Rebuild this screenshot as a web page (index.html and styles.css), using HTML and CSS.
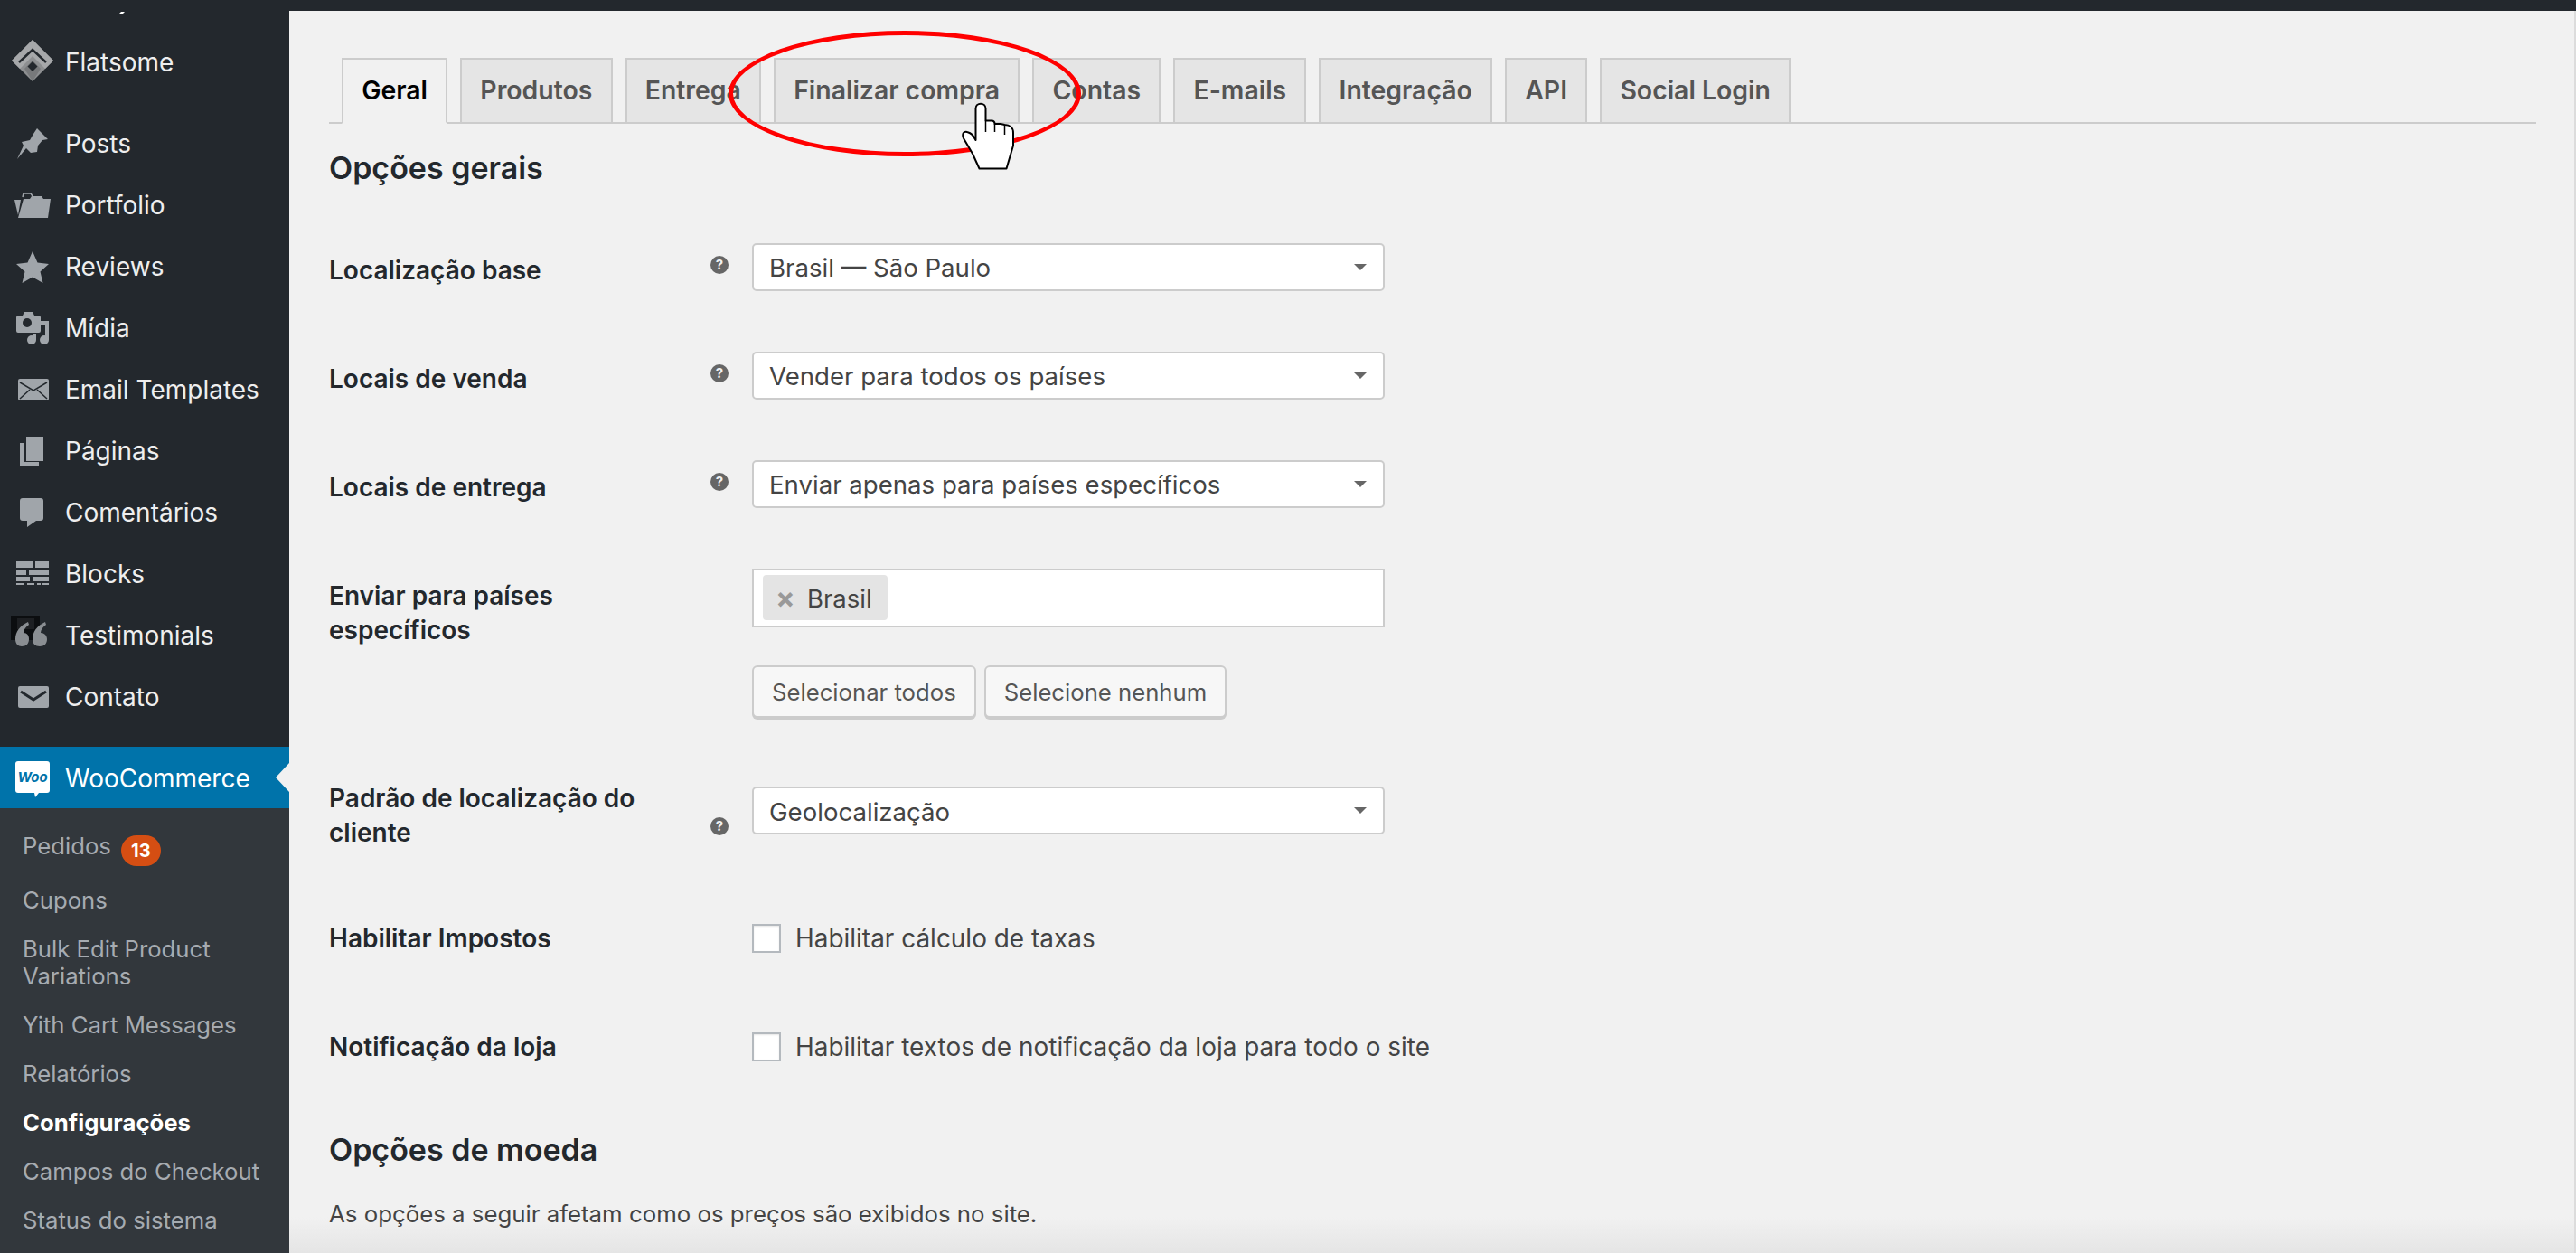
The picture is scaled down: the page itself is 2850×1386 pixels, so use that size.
FILE: index.html
```html
<!DOCTYPE html>
<html lang="pt-BR">
<head>
  <meta charset="UTF-8" />
  <title>Configurações ‹ WooCommerce</title>
  <link rel="stylesheet" href="styles.css">
</head>
<body>
  <div class="layout">
    <aside class="sidebar">
      <svg class="cut-marks" viewBox="0 0 320 16"><path d="M43 12l4 2-2-1z" fill="#888"/><path d="M132 15l2-2h4l-2 2z" fill="#fff"/></svg>

      <a class="menu-item menu-first">
        <svg class="ico" viewBox="0 0 72 68"><path d="M36 9l23 23-23 23-23-23z" fill="#8d8f91"/><path d="M36 9L13 32l9 9 14-14 14 14 9-9z" fill="#a6a8aa"/><path d="M21 34l15-14 15 14" fill="none" stroke="#23282d" stroke-width="2.5"/><path d="M27 41l9 14 9-14-9-9z" fill="#77797b"/><path d="M36 33l5.500 5.500-5.500 5.500-5.500-5.500z" fill="#23282d"/></svg>
        <span>Flatsome</span>
      </a>

      <div class="menu-group">
        <a class="menu-item">
          <svg class="ico" viewBox="0 0 72 68"><path d="M41 17l12 12-6 1-5 6-1 7-7 1-5-5-10 12 7-15-2-4 9-2 4-7z" fill="#a0a5aa"/></svg>
          <span>Posts</span>
        </a>
        <a class="menu-item">
          <svg class="ico" viewBox="0 0 72 68"><path d="M26 27h7l2-3h11l2 3h8l-3 21H20z" fill="#a0a5aa"/><path d="M16 28h7l-3 17z" fill="#a0a5aa"/><path d="M25 25l1-4h8l2 3" fill="none" stroke="#a0a5aa" stroke-width="1.500"/></svg>
          <span>Portfolio</span>
        </a>
        <a class="menu-item">
          <svg class="ico" viewBox="0 0 72 68"><path d="M36 17l5.500 12.500L54 31l-9.500 8.500L47.500 52 36 45.500 24.500 52l3-12.500L18 31l12.500-1.500z" fill="#a0a5aa"/></svg>
          <span>Reviews</span>
        </a>
        <a class="menu-item">
          <svg class="ico" viewBox="0 0 72 68"><path d="M20 20h5l2-4h9l2 4h5a2 2 0 0 1 2 2v15a2 2 0 0 1-2 2H20a2 2 0 0 1-2-2V22a2 2 0 0 1 2-2z" fill="#a0a5aa"/><circle cx="30" cy="28" r="5" fill="#23282d"/><path d="M44 26h10v21h-4V30h-6z" fill="#a0a5aa"/><circle cx="35" cy="47" r="5" fill="#a0a5aa"/><circle cx="49" cy="47" r="5" fill="#a0a5aa"/><path d="M36 47v-7h4v7z" fill="#a0a5aa"/></svg>
          <span>Mídia</span>
        </a>
        <a class="menu-item">
          <svg class="ico" viewBox="0 0 72 68"><rect x="20" y="22" width="34" height="24" rx="2" fill="#a0a5aa"/><path d="M22 26l15 9 15-9M22 44l11-10M52 44L41 34" fill="none" stroke="#23282d" stroke-width="1.500"/></svg>
          <span>Email Templates</span>
        </a>
        <a class="menu-item">
          <svg class="ico" viewBox="0 0 72 68"><rect x="29" y="18" width="19" height="27" fill="#a0a5aa"/><path d="M22 25h4v21h17v4H22z" fill="#a0a5aa"/></svg>
          <span>Páginas</span>
        </a>
        <a class="menu-item">
          <svg class="ico" viewBox="0 0 72 68"><path d="M25 18h20a3 3 0 0 1 3 3v19a3 3 0 0 1-3 3h-5l-10 7v-7h-5a3 3 0 0 1-3-3V21a3 3 0 0 1 3-3z" fill="#a0a5aa"/></svg>
          <span>Comentários</span>
        </a>
        <a class="menu-item">
          <svg class="ico" viewBox="0 0 72 68"><path d="M18 20h19v7H18zM39 20h15v7H39zM18 29h11v6H18zM32 29h22v6H32zM18 37h15v5H18zM36 37h18v5H36zM18 44h8v2h-8zM30 44h8v2h-8zM41 44h4v2h-4zM47 44h7v2h-7z" fill="#a0a5aa"/></svg>
          <span>Blocks</span>
        </a>
        <a class="menu-item">
          <svg class="ico" viewBox="0 0 72 68"><rect x="12" y="12" width="32" height="27" fill="#0c0e10"/><rect x="19" y="15" width="19" height="12" fill="#1d1f22"/><path d="M17 38c0-8 5-15 14-19l1 3c-4 3-6 6-6 9 4 0 6 3 6 7 0 5-3 8-8 8-4 0-7-3-7-8zM36 38c0-8 5-15 14-19l1 3c-4 3-6 6-6 9 4 0 7 3 7 7 0 5-3 8-8 8s-8-3-8-8z" fill="#8a8e92"/></svg>
          <span>Testimonials</span>
        </a>
        <a class="menu-item">
          <svg class="ico" viewBox="0 0 72 68"><rect x="20" y="22" width="34" height="24" rx="2" fill="#a0a5aa"/><path d="M23 28l14 9 14-9" fill="none" stroke="#23282d" stroke-width="3"/></svg>
          <span>Contato</span>
        </a>
      </div>

      <a class="menu-item menu-current">
        <svg class="ico" viewBox="0 0 72 68"><path d="M20 15h32a3 3 0 0 1 3 3v29a3 3 0 0 1-3 3H43l-4 5-1-5H20a3 3 0 0 1-3-3V18a3 3 0 0 1 3-3z" fill="#fff"/><text class="woo-text" x="36" y="38" text-anchor="middle">Woo</text></svg>
        <span>WooCommerce</span>
      </a>
      <ul class="submenu">
        <li class="sub-orders">Pedidos <span class="badge">13</span></li>
        <li>Cupons</li>
        <li class="sub-wrap">Bulk Edit Product Variations</li>
        <li>Yith Cart Messages</li>
        <li>Relatórios</li>
        <li class="sub-current">Configurações</li>
        <li>Campos do Checkout</li>
        <li>Status do sistema</li>
      </ul>
    </aside>

    <main class="content">
      <nav class="tabs">
        <a class="tab tab-active">Geral</a>
        <a class="tab">Produtos</a>
        <a class="tab">Entrega</a>
        <a class="tab">Finalizar compra</a>
        <a class="tab">Contas</a>
        <a class="tab">E-mails</a>
        <a class="tab">Integração</a>
        <a class="tab">API</a>
        <a class="tab">Social Login</a>
      </nav>

      <h2 class="section-title">Opções gerais</h2>

      <div class="row">
        <label class="row-label">Localização base</label>
        <span class="help">?</span>
        <div class="select">Brasil — São Paulo</div>
      </div>
      <div class="row">
        <label class="row-label">Locais de venda</label>
        <span class="help">?</span>
        <div class="select">Vender para todos os países</div>
      </div>
      <div class="row">
        <label class="row-label">Locais de entrega</label>
        <span class="help">?</span>
        <div class="select">Enviar apenas para países específicos</div>
      </div>
      <div class="row row-countries">
        <label class="row-label">Enviar para países específicos</label>
        <span></span>
        <div>
          <div class="multi"><span class="chip"><b class="chip-x">×</b>Brasil</span></div>
          <div class="btn-row">
            <button class="btn">Selecionar todos</button>
            <button class="btn">Selecione nenhum</button>
          </div>
        </div>
      </div>
      <div class="row row-default">
        <label class="row-label">Padrão de localização do cliente</label>
        <span class="help">?</span>
        <div class="select">Geolocalização</div>
      </div>
      <div class="row row-check row-taxes">
        <label class="row-label">Habilitar Impostos</label>
        <span></span>
        <div class="check-line"><span class="checkbox"></span>Habilitar cálculo de taxas</div>
      </div>
      <div class="row row-check row-notice">
        <label class="row-label">Notificação da loja</label>
        <span></span>
        <div class="check-line"><span class="checkbox"></span>Habilitar textos de notificação da loja para todo o site</div>
      </div>

      <h2 class="section-title section-currency">Opções de moeda</h2>
      <p class="section-desc">As opções a seguir afetam como os preços são exibidos no site.</p>

      <!-- marcacao do tutorial por cima das abas -->
      <div class="annot-circle"></div>
      <svg class="annot-hand" viewBox="0 0 90 90"><path d="M29.500 50V15c0-7 11-7 11 0v13.500H47c2 0 3.500 1.500 3.500 3.500H57l4.500 1c5.500 0 9.500 3 9.500 9v14l-7.500 25.500h-30L26 65 16 48c-2-5 0-8 4-7 5 1 7 4 9.500 9z" fill="#fff" stroke="#000" stroke-width="2" stroke-linejoin="round"/><path d="M40.500 28.500V41M50.500 32v9M61.500 33v11" fill="none" stroke="#000" stroke-width="1.500"/></svg>
    </main>
  </div>
</body>
</html>
```
FILE: styles.css
```css
* {
  box-sizing: border-box;
}

html, body {
  margin: 0;
  padding: 0;
  height: 100%;
  overflow: hidden;
}

body {
  font-family: 'Inter', 'Liberation Sans', sans-serif;
  background-color: #23282d;
  color: #444;
}

.layout {
  display: flex;
  height: 1386px;
}

/* menu lateral */
.sidebar {
  width: 320px;
  flex-shrink: 0;
  background-color: #23282d;
  overflow: hidden;
}

.cut-marks {
  display: block;
  width: 320px;
  height: 16px;
}

.menu-first {
  margin-top: 18px;
}

.menu-group {
  margin: 22px 0;
}

.menu-item {
  display: flex;
  align-items: center;
  height: 68px;
  padding-top: 1px;
  color: #eee;
  font-size: 28px;
  font-weight: 400;
}

.ico {
  width: 72px;
  height: 68px;
  flex-shrink: 0;
}

.woo-text {
  font-family: 'Inter', sans-serif;
  font-size: 15px;
  font-weight: 700;
  font-style: italic;
  fill: #0073aa;
}

.menu-current {
  position: relative;
  background-color: #0073aa;
  color: #fff;
}

.menu-current::after {
  content: "";
  position: absolute;
  right: 0;
  top: 18px;
  border-style: solid;
  border-width: 16px 15px 16px 0;
  border-color: transparent #f1f1f1 transparent transparent;
}

.submenu {
  list-style: none;
  margin: 0;
  padding: 15px 0 60px;
  background-color: #32373c;
  color: #a6abb1;
  font-size: 25.700px;
  line-height: 30px;
}

.submenu li {
  padding: 12px 25px;
}

.submenu .sub-orders {
  height: 60px;
}

.sub-current {
  color: #fff;
  font-weight: 700;
}

.badge {
  display: inline-block;
  margin-left: 4px;
  padding: 0 11px;
  height: 34px;
  line-height: 34px;
  border-radius: 17px;
  background-color: #d54e13;
  color: #fff;
  font-size: 20px;
  font-weight: 700;
  vertical-align: -3px;
}

/* conteudo */
.content {
  position: relative;
  flex: 1;
  margin-top: 12px;
  padding: 52px 42px 0 44px;
  background: linear-gradient(to bottom, #f1f1f1 calc(100% - 40px), #e5e5e5 100%);
  border-right: 2px solid #dcdcdc;
}

.tabs {
  display: flex;
  gap: 14px;
  padding-left: 14px;
  height: 73px;
  border-bottom: 2px solid #ccc;
}

.tab {
  height: 73px;
  padding: 0 20.200px;
  line-height: 68px;
  background-color: #e5e5e5;
  border: 2px solid #ccc;
  color: #555;
  font-size: 28.400px;
  font-weight: 600;
}

.tab-active {
  background-color: #f1f1f1;
  border-bottom-color: #f1f1f1;
  color: #000;
}

.section-title {
  margin: 29px 0 63px;
  font-size: 34px;
  line-height: 40px;
  font-weight: 600;
  color: #23282d;
}

.section-currency {
  margin: 82px 0 32px;
}

.section-desc {
  margin: 0;
  font-size: 25.800px;
  line-height: 38px;
}

.row {
  display: grid;
  grid-template-columns: 422px 46px 700px;
  align-items: start;
  margin-bottom: 67px;
}

.row-label {
  display: block;
  width: 380px;
  padding-top: 11px;
  font-size: 28px;
  line-height: 38px;
  font-weight: 600;
  color: #23282d;
}

.help {
  display: block;
  width: 20px;
  height: 20px;
  margin-top: 14px;
  border-radius: 50%;
  background-color: #666;
  color: #f1f1f1;
  font-size: 15px;
  line-height: 20px;
  font-weight: 700;
  text-align: center;
}

.select {
  position: relative;
  height: 53px;
  padding-left: 17px;
  background-color: #fff;
  border: 2px solid #ccc;
  border-radius: 5px;
  font-size: 27.600px;
  line-height: 51px;
}

.select::after {
  content: "";
  position: absolute;
  right: 18px;
  top: 21px;
  border-style: solid;
  border-width: 7px 7px 0;
  border-color: #666 transparent transparent;
}

.multi {
  height: 65px;
  padding: 5px 10px;
  background-color: #fff;
  border: 2px solid #ccc;
}

.chip {
  display: inline-block;
  width: 138px;
  height: 50px;
  padding-left: 14px;
  background-color: #e4e4e4;
  border-radius: 4px;
  font-size: 27.500px;
  line-height: 52px;
}

.chip-x {
  display: inline-block;
  width: 35px;
  color: #999;
  font-size: 32px;
  vertical-align: -1px;
}

.btn-row {
  display: flex;
  gap: 9px;
  margin-top: 42px;
}

.btn {
  height: 58px;
  padding: 0 20px;
  background-color: #f7f7f7;
  border: 2px solid #ccc;
  border-radius: 6px;
  box-shadow: 0 2px 0 #ccc;
  color: #555;
  font-family: inherit;
  font-size: 25.700px;
}

.row-countries {
  margin-bottom: 76px;
}

.row-default {
  margin-bottom: 78px;
}

.row-default .row-label {
  margin-top: -6px;
  padding-top: 0;
}

.row-default .help {
  margin-top: 34px;
}

.row-default .select {
  line-height: 53px;
}

.row-check {
  align-items: center;
  height: 32px;
  margin-bottom: 88px;
}

.row-check .row-label {
  padding-top: 0;
  margin-top: 1px;
}

.row-notice {
  margin-bottom: 0;
}

.check-line {
  display: flex;
  align-items: center;
  gap: 16px;
  font-size: 27.950px;
  white-space: nowrap;
}

.checkbox {
  flex-shrink: 0;
  width: 32px;
  height: 32px;
  background-color: #fff;
  border: 2px solid #b4b9be;
  box-shadow: inset 0 1px 2px rgba(0, 0, 0, 0.1);
}

.annot-circle {
  position: absolute;
  left: 486px;
  top: 22px;
  width: 390px;
  height: 139px;
  border: 5px solid #f00;
  border-radius: 50%;
}

.annot-hand {
  position: absolute;
  left: 730px;
  top: 93px;
  width: 90px;
  height: 90px;
}
```
